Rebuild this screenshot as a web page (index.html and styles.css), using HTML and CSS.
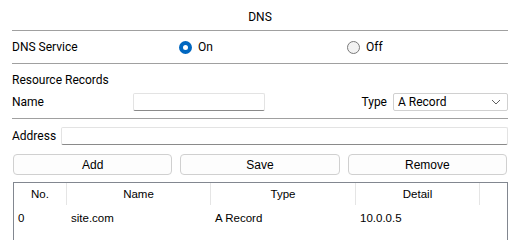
FILE: index.html
```html
<!DOCTYPE html>
<html lang="en">
<head>
  <meta charset="UTF-8">
  <title>DNS</title>
  <link rel="stylesheet" href="styles.css">
</head>
<body>
  <div class="panel">
    <div class="title">DNS</div>

    <div class="row service">
      <span class="label">DNS Service</span>
      <label class="radio radio-on"><span class="dot checked"></span>On</label>
      <label class="radio radio-off"><span class="dot"></span>Off</label>
    </div>

    <div class="records">
      <div class="section">Resource Records</div>
      <div class="row name-row">
        <span class="label">Name</span>
        <input type="text" class="name-input">
        <span class="type-label">Type</span>
        <div class="select">
          <span>A Record</span>
          <svg width="10" height="6" viewBox="0 0 10 6"><path d="M1 1l4 4 4-4" fill="none" stroke="#606060" stroke-width="1"/></svg>
        </div>
      </div>
    </div>

    <div class="row address-row">
      <span class="label">Address</span>
      <input type="text" class="address-input">
    </div>

    <div class="buttons">
      <button>Add</button>
      <button>Save</button>
      <button>Remove</button>
    </div>

    <div class="table">
      <div class="thead">
        <div class="c-no">No.</div>
        <div class="c-name">Name</div>
        <div class="c-type">Type</div>
        <div class="c-detail">Detail</div>
        <div class="c-rest"></div>
      </div>
      <div class="tr">
        <div class="c-no">0</div>
        <div class="c-name">site.com</div>
        <div class="c-type">A Record</div>
        <div class="c-detail">10.0.0.5</div>
        <div class="c-rest"></div>
      </div>
    </div>
  </div>
</body>
</html>
```

FILE: styles.css
```css
body {
  margin: 0;
  background: #fff;
  font-family: Roboto, "Liberation Sans", sans-serif;
  font-size: 12px;
  color: #000;
  overflow: hidden;
}

.panel {
  padding: 0 12px;
  width: 496px;
}

.title {
  height: 30px;
  line-height: 34px;
  text-align: center;
  border-bottom: 1px solid #a0a0a0;
}

.row {
  display: flex;
  align-items: center;
}

.service {
  height: 32px;
  border-bottom: 1px solid #a0a0a0;
}

.service .label {
  width: 167px;
}

.radio {
  display: flex;
  align-items: center;
  gap: 6px;
}

.radio-on {
  width: 168px;
}

.dot {
  width: 13px;
  height: 13px;
  border: 1px solid #7a7a7a;
  border-radius: 50%;
  box-sizing: border-box;
  background: #f3f3f3;
}

.dot.checked {
  border: 4px solid #0067c0;
  background: #fff;
}

.records {
  border-bottom: 1px solid #a0a0a0;
  padding-bottom: 5px;
}

.section {
  height: 22px;
  line-height: 32px;
}

.name-row {
  height: 22px;
  margin-top: 5px;
}

.name-row .label {
  width: 121px;
}

.name-input {
  width: 132px;
  height: 18px;
  box-sizing: border-box;
  border: 1px solid #e3e3e3;
  border-bottom: 1px solid #8a8a8a;
  border-radius: 2px;
  margin: 0;
}

.type-label {
  margin-left: auto;
  margin-right: 6px;
}

.select {
  width: 115px;
  height: 18px;
  box-sizing: border-box;
  border: 1px solid #d0d0d0;
  border-radius: 2px;
  display: flex;
  align-items: center;
  justify-content: space-between;
  padding: 0 6px 0 4px;
}

.address-row {
  height: 34px;
}

.address-row .label {
  width: 49px;
}

.address-input {
  flex: 1;
  height: 18px;
  box-sizing: border-box;
  border: 1px solid #e3e3e3;
  border-bottom: 1px solid #8a8a8a;
  border-radius: 2px;
  margin: 0;
}

.buttons {
  display: flex;
  gap: 8px;
  padding: 0 1px;
  margin-top: 1px;
}

.buttons button {
  flex: 1;
  height: 21px;
  background: #fdfdfd;
  border: 1px solid #d0d0d0;
  border-radius: 4px;
  font-family: "Liberation Sans", Arial, sans-serif;
  font-size: 12px;
  padding: 0;
}

.table {
  margin: 7px 0 0 1px;
  border: 1px solid #828790;
  height: 57px;
  font-family: "Liberation Sans", Arial, sans-serif;
  font-size: 11.5px;
}

.thead, .tr {
  display: flex;
}

.thead div {
  height: 22px;
  line-height: 23px;
  text-align: center;
  border-right: 1px solid #e5e5e5;
  box-sizing: border-box;
}

.thead .c-rest {
  border-right: none;
}

.tr div {
  height: 26px;
  line-height: 27px;
  padding-left: 4px;
  box-sizing: border-box;
}

.c-no { width: 53px; }
.c-name { width: 144px; }
.c-type { width: 145px; }
.c-detail { width: 124px; }
.c-rest { flex: 1; }
```
